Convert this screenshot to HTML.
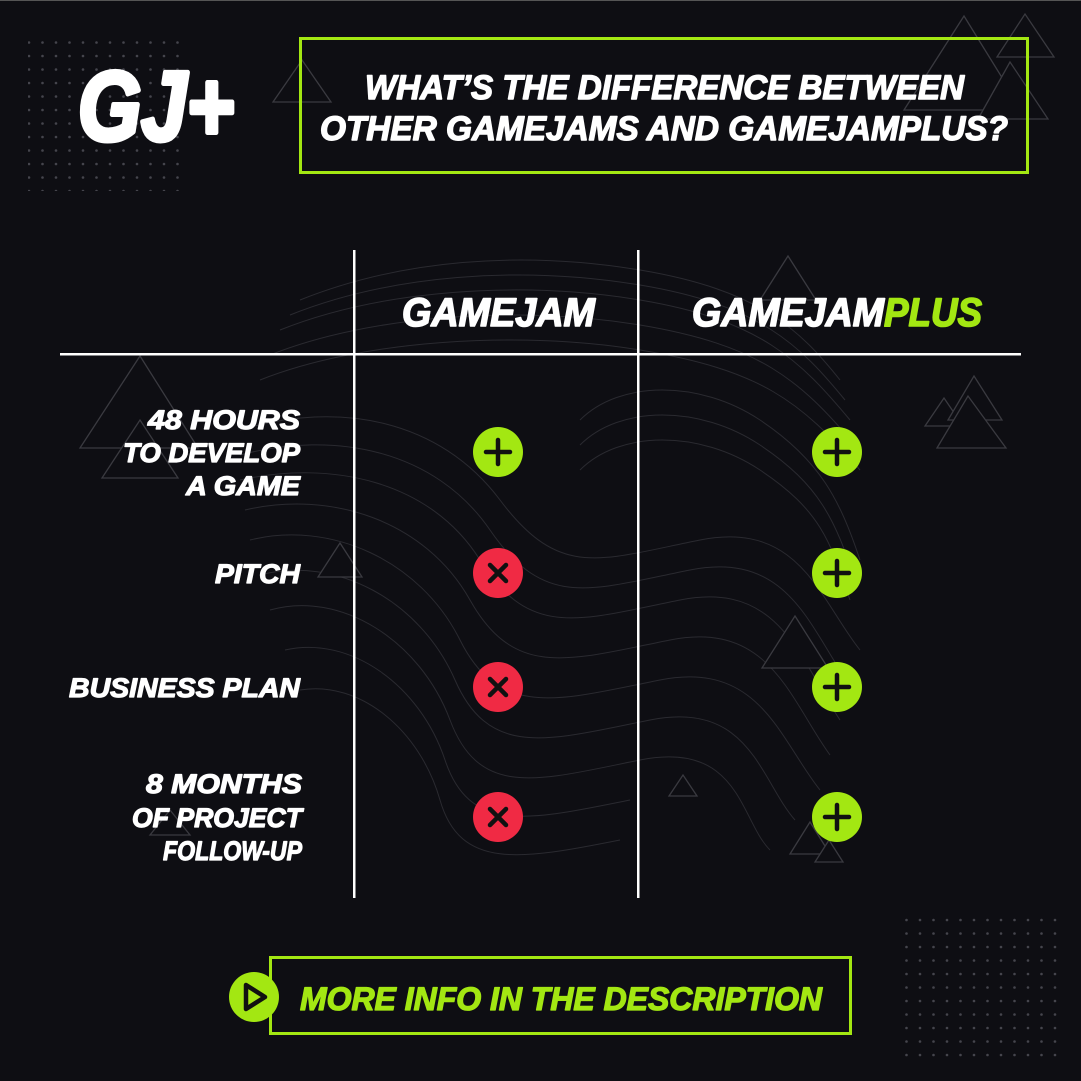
<!DOCTYPE html>
<html><head><meta charset="utf-8"><style>
html,body{margin:0;padding:0;background:#0e0e13;}
svg{display:block}
text{font-family:"Liberation Sans",sans-serif;font-weight:bold;font-style:italic;}
</style></head><body>
<svg width="1081" height="1081" viewBox="0 0 1081 1081" xmlns="http://www.w3.org/2000/svg">
<defs>
<pattern id="dots" width="13.5" height="13.5" patternUnits="userSpaceOnUse"><circle cx="2" cy="2" r="1.3" fill="#45454d"/></pattern>
</defs>
<rect width="1081" height="1081" fill="#0e0e13"/>
<rect x="0" y="0" width="1081" height="1" fill="#555"/>
<rect x="28" y="35" width="156" height="156" fill="url(#dots)"/>
<rect x="903" y="910" width="156" height="156" fill="url(#dots)"/>
<g fill="none" stroke="#2a2a30" stroke-width="1">
<path d="M300 300 C400 260 520 250 640 270 S800 330 840 380"/>
<path d="M290 315 C390 275 520 265 640 285 S800 345 845 400"/>
<path d="M280 330 C380 290 520 280 640 300 S800 360 850 420"/>
<path d="M270 355 C370 315 520 305 640 325 S800 380 855 445"/>
<path d="M260 380 C360 340 520 330 640 350 S800 400 860 470"/>
<path d="M240 430 C340 400 440 420 500 500 S600 560 700 540 S820 600 860 650"/>
<path d="M240 455 C335 430 435 450 490 530 S590 590 690 570 S810 630 850 685"/>
<path d="M240 480 C330 460 430 480 480 560 S580 620 680 600 S800 660 840 720"/>
<path d="M245 510 C330 490 425 520 470 600 S570 660 670 640 S790 700 830 755"/>
<path d="M250 540 C330 520 420 560 460 640 S560 700 660 680 S780 740 820 790"/>
<path d="M260 575 C335 555 420 600 455 680 S550 740 650 720 S760 780 795 820"/>
<path d="M270 610 C340 590 420 640 450 720 S540 780 640 760 S740 820 770 850"/>
<path d="M285 650 C350 635 420 685 445 760 S530 820 630 800"/>
<path d="M300 690 C360 680 420 730 440 800 S520 860 620 840"/>
<path d="M580 420 C620 380 700 380 760 420 S840 500 860 560"/>
<path d="M580 445 C620 405 700 405 760 445 S835 520 855 580"/>
<path d="M580 470 C620 430 700 430 760 470 S830 540 850 600"/>
</g>
<g fill="#0e0e13" stroke="#3a3a40" stroke-width="1.3">
<path d="M273 102 L302 60 L331 102 Z"/>
<path d="M904 110 L964 16 L1022 110 Z"/>
<path d="M978 119 L1010 62 L1048 119 Z"/>
<path d="M997 57 L1025 14 L1054 57 Z"/>
<path d="M80 448 L140 356 L198 448 Z"/>
<path d="M102 478 L140 420 L178 478 Z"/>
<path d="M760 300 L788 256 L816 300 Z"/>
<path d="M925 426 L944 398 L963 426 Z"/>
<path d="M948 420 L974 376 L1002 420 Z"/>
<path d="M937 448 L968 396 L1006 448 Z"/>
<path d="M318 577 L340 543 L362 577 Z"/>
<path d="M762 668 L795 616 L828 668 Z"/>
<path d="M669 796 L683 775 L697 796 Z"/>
<path d="M790 854 L810 822 L830 854 Z"/>
<path d="M815 862 L829 840 L843 862 Z"/>
<path d="M150 835 L170 810 L190 835 Z"/>
</g>
<text x="78" y="140" font-size="98" fill="#fff" stroke="#fff" stroke-width="5" stroke-linejoin="round" textLength="156" lengthAdjust="spacingAndGlyphs">GJ+</text>
<rect x="300.5" y="38.5" width="727" height="134" fill="none" stroke="#a3e712" stroke-width="3"/>
<g fill="#fff" stroke="#fff" stroke-width="1.4" stroke-linejoin="round">
<text x="365" y="99" font-size="34" textLength="599" lengthAdjust="spacingAndGlyphs">WHAT’S THE DIFFERENCE BETWEEN</text>
<text x="320" y="140" font-size="34" textLength="688" lengthAdjust="spacingAndGlyphs">OTHER GAMEJAMS AND GAMEJAMPLUS?</text>
</g>
<rect x="353" y="250" width="2.5" height="648" fill="#fff"/>
<rect x="637" y="250" width="2.5" height="648" fill="#fff"/>
<rect x="60" y="353" width="961" height="2.5" fill="#fff"/>
<g stroke-width="1.6" stroke-linejoin="round">
<text x="402" y="326" font-size="40" fill="#fff" stroke="#fff" textLength="193" lengthAdjust="spacingAndGlyphs">GAMEJAM</text>
<text x="692" y="326" font-size="40" fill="#fff" stroke="#fff" textLength="192" lengthAdjust="spacingAndGlyphs">GAMEJAM</text>
<text x="884" y="326" font-size="40" fill="#a3e712" stroke="#a3e712" textLength="98" lengthAdjust="spacingAndGlyphs">PLUS</text>
</g>
<g fill="#fff" stroke="#fff" stroke-width="1.2" stroke-linejoin="round" font-size="27">
<text x="148" y="429" textLength="152" lengthAdjust="spacingAndGlyphs">48 HOURS</text>
<text x="123" y="462" textLength="177" lengthAdjust="spacingAndGlyphs">TO DEVELOP</text>
<text x="186" y="495" textLength="114" lengthAdjust="spacingAndGlyphs">A GAME</text>
<text x="215" y="583" textLength="85" lengthAdjust="spacingAndGlyphs">PITCH</text>
<text x="69" y="697" textLength="231" lengthAdjust="spacingAndGlyphs">BUSINESS PLAN</text>
<text x="146" y="793" textLength="156" lengthAdjust="spacingAndGlyphs">8 MONTHS</text>
<text x="132" y="827" textLength="170" lengthAdjust="spacingAndGlyphs">OF PROJECT</text>
<text x="163" y="860" textLength="139" lengthAdjust="spacingAndGlyphs">FOLLOW-UP</text>
</g>
<g stroke="#111" stroke-width="4.5" stroke-linecap="round">
<circle cx="498" cy="452" r="25" fill="#a3e712" stroke="none"/>
<path d="M486 452 H510 M498 440 V464"/>
<circle cx="837" cy="452" r="25" fill="#a3e712" stroke="none"/>
<path d="M825 452 H849 M837 440 V464"/>
<circle cx="837" cy="573" r="25" fill="#a3e712" stroke="none"/>
<path d="M825 573 H849 M837 561 V585"/>
<circle cx="837" cy="687" r="25" fill="#a3e712" stroke="none"/>
<path d="M825 687 H849 M837 675 V699"/>
<circle cx="837" cy="817" r="25" fill="#a3e712" stroke="none"/>
<path d="M825 817 H849 M837 805 V829"/>
<circle cx="498" cy="573" r="25" fill="#f02a44" stroke="none"/>
<path d="M490 565 L506 581 M506 565 L490 581"/>
<circle cx="498" cy="687" r="25" fill="#f02a44" stroke="none"/>
<path d="M490 679 L506 695 M506 679 L490 695"/>
<circle cx="498" cy="817" r="25" fill="#f02a44" stroke="none"/>
<path d="M490 809 L506 825 M506 809 L490 825"/>
</g>
<rect x="270.5" y="957.5" width="580" height="76" fill="none" stroke="#a3e712" stroke-width="3"/>
<circle cx="254" cy="997" r="25" fill="#a3e712"/>
<path d="M246 985 L265 997 L246 1009 Z" fill="none" stroke="#111" stroke-width="4.5" stroke-linejoin="round"/>
<text x="300" y="1010" font-size="32" fill="#a3e712" stroke="#a3e712" stroke-width="1.3" stroke-linejoin="round" textLength="522" lengthAdjust="spacingAndGlyphs">MORE INFO IN THE DESCRIPTION</text>
</svg>
</body></html>
